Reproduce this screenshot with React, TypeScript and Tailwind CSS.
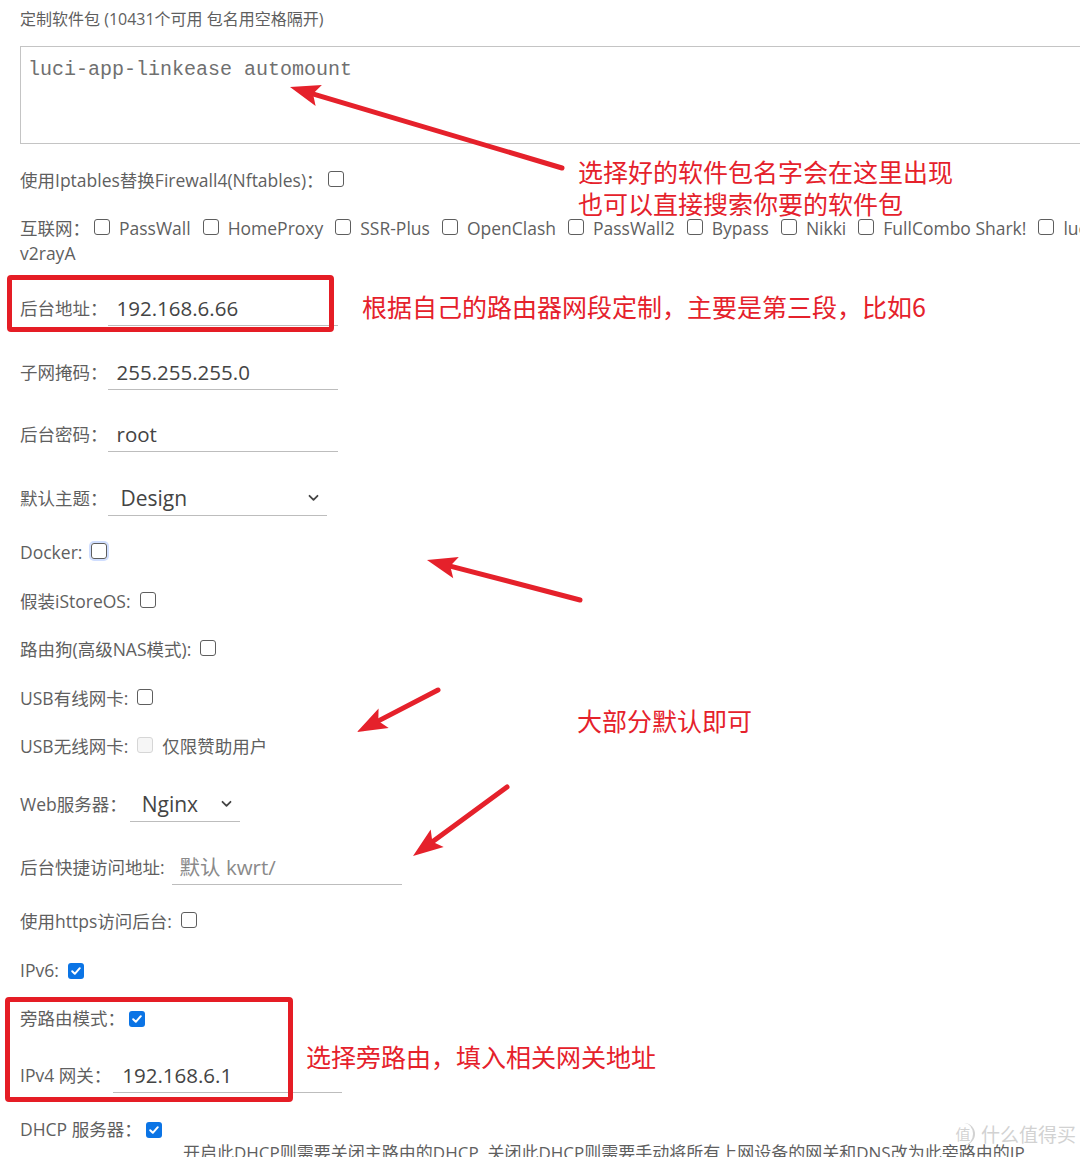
import React from 'react';

const RED = '#e5212b';

function Box({ checked, disabled, focus }: { checked?: boolean; disabled?: boolean; focus?: boolean }) {
  if (checked) {
    return (
      <span className="inline-flex h-[16px] w-[16px] shrink-0 items-center justify-center rounded-[3px] bg-[#0b74e5]">
        <svg width="12" height="12" viewBox="0 0 12 12">
          <path d="M2.2 6.3 L4.8 8.8 L9.8 3.2" fill="none" stroke="#fff" strokeWidth="2" strokeLinecap="round" strokeLinejoin="round" />
        </svg>
      </span>
    );
  }
  return (
    <span
      className={
        disabled
          ? 'inline-block h-[16px] w-[16px] shrink-0 rounded-[3px] border border-[#d6d6d6] bg-[#f6f6f6]'
          : focus
          ? 'inline-block h-[16px] w-[16px] shrink-0 rounded-[3px] border border-[#5e5e5e] shadow-[0_0_0_2px_rgba(120,160,255,0.35)]'
          : 'inline-block h-[16px] w-[16px] shrink-0 rounded-[3px] border border-[#5e5e5e]'
      }
    />
  );
}

function CheckRow({ label, mt, ml = 'ml-[9px]', checked, focus, disabled, after }: {
  label: string; mt: string; ml?: string; checked?: boolean; focus?: boolean; disabled?: boolean; after?: string;
}) {
  return (
    <div className={`${mt} flex h-[24px] items-center`}>
      <span>{label}</span>
      <span className={ml}>
        <Box checked={checked} focus={focus} disabled={disabled} />
      </span>
      {after && <span className="ml-[9px]">{after}</span>}
    </div>
  );
}

function InputRow({ label, value, placeholder, mt, ml, w, pl }: {
  label: string; value?: string; placeholder?: string; mt: string; ml: string; w: string; pl: string;
}) {
  return (
    <div className={`${mt} flex h-[36px] items-center`}>
      <span>{label}</span>
      <div className={`${ml} ${w} ${pl} flex h-[36px] items-center border-b border-[#bdbdbd] text-[20.5px]`}>
        {value ? <span className="text-[#444]">{value}</span> : <span className="text-[#8a8a8a]">{placeholder}</span>}
      </div>
    </div>
  );
}

function Chevron() {
  return (
    <svg width="11" height="8" viewBox="0 0 11 8">
      <path d="M1.5 1.8 L5.5 5.8 L9.5 1.8" fill="none" stroke="#444" strokeWidth="1.8" strokeLinecap="round" strokeLinejoin="round" />
    </svg>
  );
}

function SelectRow({ label, value, mt, ml, w, pl }: { label: string; value: string; mt: string; ml: string; w: string; pl: string }) {
  return (
    <div className={`${mt} flex h-[36px] items-center`}>
      <span>{label}</span>
      <div className={`${ml} ${w} ${pl} flex h-[36px] items-center justify-between border-b border-[#bdbdbd] pr-[8px] text-[21px] text-[#444]`}>
        <span>{value}</span>
        <Chevron />
      </div>
    </div>
  );
}

function Arrow({ x1, y1, x2, y2, sw = 5 }: { x1: number; y1: number; x2: number; y2: number; sw?: number }) {
  const dx = x2 - x1;
  const dy = y2 - y1;
  const len = Math.hypot(dx, dy);
  const ux = dx / len;
  const uy = dy / len;
  const hl = 30;
  const hw = 11;
  const bx = x2 - ux * hl;
  const by = y2 - uy * hl;
  const pts = `${x2},${y2} ${bx - uy * hw},${by + ux * hw} ${bx + ux * 6},${by + uy * 6} ${bx + uy * hw},${by - ux * hw}`;
  return (
    <g>
      <line x1={x1} y1={y1} x2={bx + ux * 8} y2={by + uy * 8} stroke={RED} strokeWidth={sw} strokeLinecap="round" />
      <polygon points={pts} fill={RED} />
    </g>
  );
}

const apps = ['PassWall', 'HomeProxy', 'SSR-Plus', 'OpenClash', 'PassWall2', 'Bypass', 'Nikki', 'FullCombo Shark!'];

export default function App() {
  return (
    <div className="relative h-[1157px] w-[1080px] overflow-hidden bg-white font-['Open_Sans','Noto_Sans_CJK_SC',sans-serif] text-[17.5px] leading-[24px] text-[#5f5f5f]">
      <div className="w-[1200px] pl-[20px]">
        <div className="pt-[7px] text-[16px]">定制软件包 (10431个可用 包名用空格隔开)</div>
        <div className="mt-[15px] h-[98px] w-[1100px] border border-[#c4c4c4] px-[7px] pt-[10px] font-['Liberation_Mono',monospace] text-[20px] leading-[26px] text-[#707070]">
          luci-app-linkease automount
        </div>

        <CheckRow label="使用Iptables替换Firewall4(Nftables)：" mt="mt-[24px]" ml="ml-[4px]" />

        <div className="mt-[24px] leading-[25px]">
          <div className="flex items-center whitespace-nowrap">
            <span>互联网：</span>
            {apps.map((a) => (
              <span key={a} className="flex items-center">
                <span className="ml-[4px] mr-[9px]">
                  <Box />
                </span>
                <span className="mr-[8px]">{a}</span>
              </span>
            ))}
            <span className="ml-[4px] mr-[9px]">
              <Box />
            </span>
            <span>luci-app-</span>
          </div>
          <div>v2rayA</div>
        </div>

        <InputRow label="后台地址：" value="192.168.6.66" mt="mt-[24px]" ml="ml-0" w="w-[230px]" pl="pl-[9px]" />
        <InputRow label="子网掩码：" value="255.255.255.0" mt="mt-[28px]" ml="ml-0" w="w-[230px]" pl="pl-[9px]" />
        <InputRow label="后台密码：" value="root" mt="mt-[26px]" ml="ml-0" w="w-[230px]" pl="pl-[9px]" />
        <SelectRow label="默认主题：" value="Design" mt="mt-[28px]" ml="ml-0" w="w-[219px]" pl="pl-[13px]" />

        <CheckRow label="Docker:" mt="mt-[24px]" focus />
        <CheckRow label="假装iStoreOS:" mt="mt-[25px]" />
        <CheckRow label="路由狗(高级NAS模式):" mt="mt-[24px]" />
        <CheckRow label="USB有线网卡:" mt="mt-[25px]" />
        <CheckRow label="USB无线网卡:" mt="mt-[24px]" disabled after="仅限赞助用户" />

        <SelectRow label="Web服务器：" value="Nginx" mt="mt-[28px]" ml="ml-[3px]" w="w-[110px]" pl="pl-[12px]" />
        <InputRow label="后台快捷访问地址:" placeholder="默认 kwrt/" mt="mt-[27px]" ml="ml-[7px]" w="w-[230px]" pl="pl-[8px]" />

        <CheckRow label="使用https访问后台:" mt="mt-[24px]" />
        <CheckRow label="IPv6:" mt="mt-[25px]" checked />
        <CheckRow label="旁路由模式：" mt="mt-[24px]" ml="ml-[4px]" checked />
        <InputRow label="IPv4 网关：" value="192.168.6.1" mt="mt-[27px]" ml="ml-[2px]" w="w-[229px]" pl="pl-[9px]" />
        <CheckRow label="DHCP 服务器：" mt="mt-[24px]" ml="ml-[4px]" checked />
        <div className="pl-[163px] whitespace-nowrap text-[17px] text-[#5f5f5f]">
          开启此DHCP则需要关闭主路由的DHCP, 关闭此DHCP则需要手动将所有上网设备的网关和DNS改为此旁路由的IP
        </div>
      </div>

      {/* annotation boxes */}
      <div className="absolute left-[7px] top-[275px] h-[57px] w-[327px] rounded-[4px] border-[5px] border-[#e51d25]" />
      <div className="absolute left-[5px] top-[997px] h-[105px] w-[288px] rounded-[4px] border-[5px] border-[#e51d25]" />

      {/* annotation arrows */}
      <svg className="pointer-events-none absolute left-0 top-0" width="1080" height="1157">
        <Arrow x1={562} y1={168} x2={290} y2={87} />
        <Arrow x1={580} y1={600} x2={427} y2={560} />
        <Arrow x1={438} y1={690} x2={357} y2={732} />
        <Arrow x1={507} y1={787} x2={413} y2={856} />
      </svg>

      {/* annotation notes */}
      <div className="absolute left-[578px] top-[155px] font-['Noto_Sans_CJK_SC',sans-serif] text-[25px] leading-[32px] text-[#e5212b]">
        <div>选择好的软件包名字会在这里出现</div>
        <div>也可以直接搜索你要的软件包</div>
      </div>
      <div className="absolute left-[362px] top-[290px] font-['Noto_Sans_CJK_SC',sans-serif] text-[25px] leading-[32px] text-[#e5212b]">
        根据自己的路由器网段定制，主要是第三段，比如6
      </div>
      <div className="absolute left-[577px] top-[704px] font-['Noto_Sans_CJK_SC',sans-serif] text-[25px] leading-[32px] text-[#e5212b]">
        大部分默认即可
      </div>
      <div className="absolute left-[306px] top-[1040px] font-['Noto_Sans_CJK_SC',sans-serif] text-[25px] leading-[32px] text-[#e5212b]">
        选择旁路由，填入相关网关地址
      </div>

      {/* watermark */}
      <div className="absolute left-[953px] top-[1122px] flex items-center gap-[6px] font-['Noto_Sans_CJK_SC',sans-serif] text-[19px] leading-[24px] text-[#d2d2d2]">
        <span className="flex h-[22px] w-[22px] items-center justify-center rounded-full border-r-[2px] border-[#d2d2d2] text-[15px]">值</span>
        <span>什么值得买</span>
      </div>
    </div>
  );
}
